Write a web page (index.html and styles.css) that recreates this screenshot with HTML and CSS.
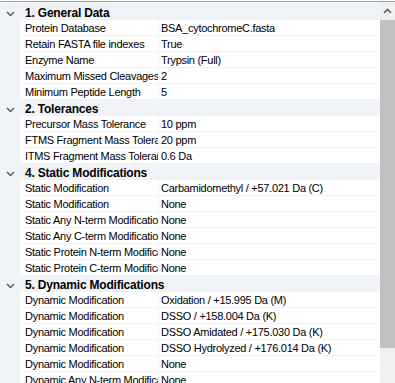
FILE: index.html
```html
<!DOCTYPE html>
<html lang="en">
<head>
    <meta charset="UTF-8">
    <title>Search Parameters</title>
    <link rel="stylesheet" href="styles.css">
</head>
<body>
    <div class="grid">
        <div class="props">
            <div class="cat"><svg class="chev" width="9" height="6" viewBox="0 0 9 6"><polyline points="1,1 4.5,4.5 8,1"/></svg>1. General Data</div>
            <div class="row"><div class="name">Protein Database</div><div class="val">BSA_cytochromeC.fasta</div></div>
            <div class="row"><div class="name">Retain FASTA file indexes</div><div class="val">True</div></div>
            <div class="row"><div class="name">Enzyme Name</div><div class="val">Trypsin (Full)</div></div>
            <div class="row"><div class="name">Maximum Missed Cleavages</div><div class="val">2</div></div>
            <div class="row"><div class="name">Minimum Peptide Length</div><div class="val">5</div></div>

            <div class="cat"><svg class="chev" width="9" height="6" viewBox="0 0 9 6"><polyline points="1,1 4.5,4.5 8,1"/></svg>2. Tolerances</div>
            <div class="row"><div class="name">Precursor Mass Tolerance</div><div class="val">10 ppm</div></div>
            <div class="row"><div class="name">FTMS Fragment Mass Tolerance</div><div class="val">20 ppm</div></div>
            <div class="row"><div class="name">ITMS Fragment Mass Tolerance</div><div class="val">0.6 Da</div></div>

            <div class="cat"><svg class="chev" width="9" height="6" viewBox="0 0 9 6"><polyline points="1,1 4.5,4.5 8,1"/></svg>4. Static Modifications</div>
            <div class="row"><div class="name">Static Modification</div><div class="val">Carbamidomethyl / +57.021 Da (C)</div></div>
            <div class="row"><div class="name">Static Modification</div><div class="val">None</div></div>
            <div class="row"><div class="name">Static Any N-term Modification</div><div class="val">None</div></div>
            <div class="row"><div class="name">Static Any C-term Modification</div><div class="val">None</div></div>
            <div class="row"><div class="name">Static Protein N-term Modification</div><div class="val">None</div></div>
            <div class="row"><div class="name">Static Protein C-term Modification</div><div class="val">None</div></div>

            <div class="cat"><svg class="chev" width="9" height="6" viewBox="0 0 9 6"><polyline points="1,1 4.5,4.5 8,1"/></svg>5. Dynamic Modifications</div>
            <div class="row"><div class="name">Dynamic Modification</div><div class="val">Oxidation / +15.995 Da (M)</div></div>
            <div class="row"><div class="name">Dynamic Modification</div><div class="val">DSSO / +158.004 Da (K)</div></div>
            <div class="row"><div class="name">Dynamic Modification</div><div class="val">DSSO Amidated / +175.030 Da (K)</div></div>
            <div class="row"><div class="name">Dynamic Modification</div><div class="val">DSSO Hydrolyzed / +176.014 Da (K)</div></div>
            <div class="row"><div class="name">Dynamic Modification</div><div class="val">None</div></div>
            <div class="row"><div class="name">Dynamic Any N-term Modification</div><div class="val">None</div></div>
        </div>
        <div class="scroll">
            <div class="up"><svg width="9" height="6" viewBox="0 0 9 6"><polyline points="1,5 4.5,1.5 8,5"/></svg></div>
            <div class="thumb"></div>
        </div>
    </div>
</body>
</html>
```

FILE: styles.css
```css
* {
    margin: 0;
    padding: 0;
    box-sizing: border-box;
}
body {
    background: #fff;
    font-family: "Liberation Sans", Arial, sans-serif;
    font-size: 11px;
    letter-spacing: -0.28px;
    color: #000;
    padding-top: 1px;
    height: 383px;
    overflow: hidden;
}
.grid {
    display: flex;
    border-top: 1px solid #a0a0a0;
    height: 382px;
    overflow: hidden;
}
.props {
    flex: 1;
    background: #f0f4f9;
    padding-top: 2px;
    overflow: hidden;
}
.cat {
    height: 15px;
    margin-bottom: 1px;
    line-height: 18px;
    padding-left: 25px;
    font-weight: bold;
    font-size: 12px;
    letter-spacing: -0.2px;
    position: relative;
}
.chev {
    position: absolute;
    left: 6px;
    top: 7px;
    fill: none;
    stroke: #555;
    stroke-width: 1.4;
}
.row {
    display: grid;
    grid-template-columns: 138px 1fr;
    column-gap: 1px;
    margin-left: 20px;
    height: 15px;
    margin-bottom: 1px;
    line-height: 17px;
}
.name,
.val {
    background: #fff;
    white-space: nowrap;
    overflow: hidden;
}
.name {
    padding-left: 5px;
}
.val {
    padding-left: 2px;
}
.scroll {
    width: 15px;
    background: #f0f0f0;
    display: flex;
    flex-direction: column;
}
.up {
    height: 18px;
    display: flex;
    justify-content: center;
    align-items: center;
}
.up svg {
    fill: none;
    stroke: #606060;
    stroke-width: 1.6;
}
.thumb {
    height: 328px;
    background: #c1c1c1;
}
```
